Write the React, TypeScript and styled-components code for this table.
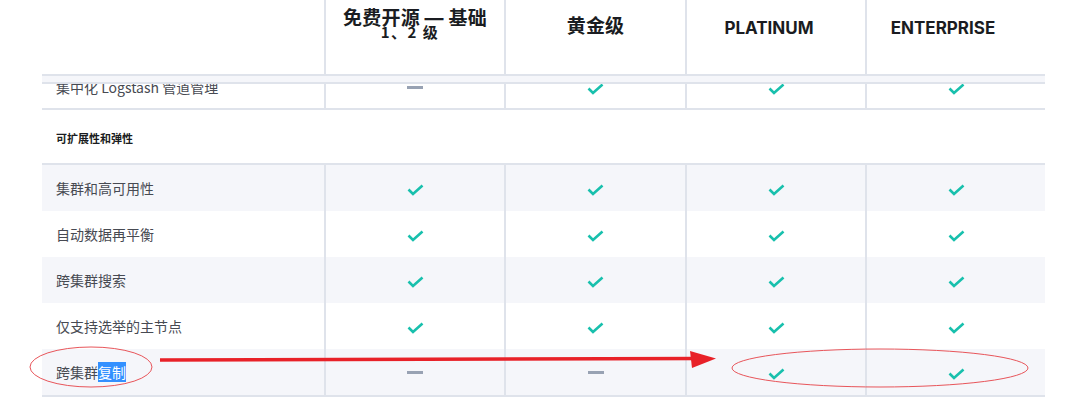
import React from "react";
import styled, { createGlobalStyle } from "styled-components";

const Global = createGlobalStyle`
  html, body { margin: 0; padding: 0; background: #fff; }
  body { font-family: Inter, "Noto Sans CJK SC", sans-serif; color: #343741; }
`;

const Page = styled.div`
  position: relative;
  width: 1080px;
  height: 397px;
  overflow: hidden;
  padding-left: 42px;
  box-sizing: border-box;
`;

const Table = styled.div`
  width: 1003px;
  display: flex;
  flex-direction: column;
`;

const COLS = "282px 180px 181px 180px 180px";

const HeaderRow = styled.div`
  display: grid;
  grid-template-columns: ${COLS};
  height: 74px;
`;

const HeaderCell = styled.div<{ $first?: boolean }>`
  border-left: ${(p) => (p.$first ? "none" : "2px solid #dfe3eb")};
  display: flex;
  flex-direction: column;
  align-items: center;
  padding-top: 16px;
  box-sizing: border-box;
  font-family: Inter, "Noto Sans CJK SC", sans-serif;
  font-weight: 700;
  color: #1a1c21;
`;

const TitleBig = styled.div<{ $pad?: number }>`
  font-size: 19px;
  line-height: 22px;
  margin-top: ${(p) => p.$pad ?? 0}px;
  letter-spacing: 0.2px;
`;

const TitleLatin = styled.div<{ $shift: number }>`
  font-size: 17px;
  line-height: 22px;
  font-weight: 700;
  margin-top: 1px;
  margin-right: ${(p) => p.$shift}px;
`;

const TitleSmall = styled.div`
  font-size: 15px;
  line-height: 10px;
  margin-top: -3px;
  margin-right: 10px;
  letter-spacing: 1.5px;
  font-family: "Noto Sans CJK SC", sans-serif;
`;

const Band = styled.div`
  height: 10px;
  box-sizing: border-box;
  border-top: 2px solid #dfe3eb;
  border-bottom: 2px solid #dfe3eb;
  background: #f5f6fa;
`;

const ClipRow = styled.div`
  height: 24px;
  overflow: hidden;
  border-bottom: 2px solid #dfe3eb;
`;

const Row = styled.div<{ $alt?: boolean; $shift?: number }>`
  display: grid;
  grid-template-columns: ${COLS};
  height: 46px;
  background: ${(p) => (p.$alt ? "#f5f6fa" : "#fff")};
  margin-top: ${(p) => p.$shift ?? 0}px;
`;

const LabelCell = styled.div`
  display: flex;
  align-items: center;
  padding-left: 14px;
  font-size: 14px;
  font-family: "Noto Sans CJK SC", Inter, sans-serif;
  color: #474a52;
`;

const ValueCell = styled.div`
  border-left: 2px solid #dfe3eb;
  display: flex;
  align-items: center;
  justify-content: center;
  padding-top: 3px;
  box-sizing: border-box;
`;

const SectionRow = styled.div`
  height: 55px;
  display: flex;
  align-items: center;
  padding-left: 14px;
  padding-top: 2px;
  box-sizing: border-box;
  font-size: 11px;
  font-weight: 700;
  font-family: "Noto Sans CJK SC", sans-serif;
  color: #1a1c21;
  border-bottom: 2px solid #dfe3eb;
`;

const Dash = styled.span`
  display: block;
  width: 16px;
  height: 3px;
  background: #98a2b3;
  margin-top: -3px;
`;

const Selected = styled.span`
  background: #3390ff;
  color: #fff;
`;

const BottomLine = styled.div`
  height: 2px;
  background: #dfe3eb;
`;

const Overlay = styled.svg`
  position: absolute;
  left: 0;
  top: 0;
  pointer-events: none;
`;

const Check = () => (
  <svg width="17" height="12" viewBox="0 0 17 12">
    <polyline
      points="1.5,5.5 6,10 15.5,1.5"
      fill="none"
      stroke="#18c0ad"
      strokeWidth="2.6"
      strokeLinecap="butt"
      strokeLinejoin="miter"
    />
  </svg>
);

type V = "y" | "n";

const Cell = ({ v }: { v: V }) => (
  <ValueCell>{v === "y" ? <Check /> : <Dash />}</ValueCell>
);

const rows: { label: React.ReactNode; vals: V[] }[] = [
  { label: "集群和高可用性", vals: ["y", "y", "y", "y"] },
  { label: "自动数据再平衡", vals: ["y", "y", "y", "y"] },
  { label: "跨集群搜索", vals: ["y", "y", "y", "y"] },
  { label: "仅支持选举的主节点", vals: ["y", "y", "y", "y"] },
  {
    label: (
      <>
        跨集群<Selected>复制</Selected>
      </>
    ),
    vals: ["n", "n", "y", "y"],
  },
];

export default function App() {
  return (
    <Page>
      <Global />
      <Table>
        <HeaderRow>
          <HeaderCell $first />
          <HeaderCell>
            <TitleBig $pad={-8}>免费开源 — 基础</TitleBig>
            <TitleSmall>1、2 级</TitleSmall>
          </HeaderCell>
          <HeaderCell>
            <TitleBig>黄金级</TitleBig>
          </HeaderCell>
          <HeaderCell>
            <TitleLatin $shift={14}>PLATINUM</TitleLatin>
          </HeaderCell>
          <HeaderCell>
            <TitleLatin $shift={26}>ENTERPRISE</TitleLatin>
          </HeaderCell>
        </HeaderRow>
        <Band />
        <ClipRow>
          <Row $shift={-20}>
            <LabelCell>集中化 Logstash 管道管理</LabelCell>
            <Cell v="n" />
            <Cell v="y" />
            <Cell v="y" />
            <Cell v="y" />
          </Row>
        </ClipRow>
        <SectionRow>可扩展性和弹性</SectionRow>
        {rows.map((r, i) => (
          <Row key={i} $alt={i % 2 === 0}>
            <LabelCell>{r.label}</LabelCell>
            {r.vals.map((v, j) => (
              <Cell key={j} v={v} />
            ))}
          </Row>
        ))}
        <BottomLine />
      </Table>
      <Overlay width="1080" height="397" viewBox="0 0 1080 397">
        <ellipse cx="91" cy="367" rx="61" ry="20" fill="none" stroke="#e8555a" strokeWidth="1" />
        <ellipse cx="880" cy="368" rx="148" ry="19" fill="none" stroke="#e8555a" strokeWidth="1" />
        <line x1="160" y1="360" x2="700" y2="358.5" stroke="#e82128" strokeWidth="3.5" />
        <polygon points="690,351 716,358.5 692,368" fill="#e82128" />
      </Overlay>
    </Page>
  );
}
